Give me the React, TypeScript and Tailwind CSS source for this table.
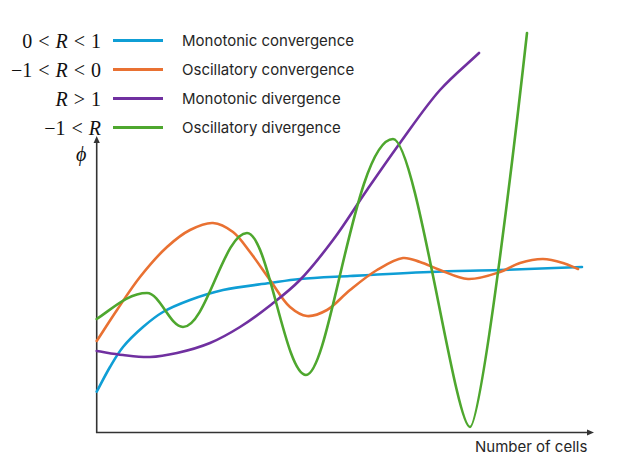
import React from "react";

type Pt = [number, number];

// sampled from the figure, in page pixels
const blue: Pt[] = [
  [96.7, 391.7], [110, 367], [123, 347], [143, 327], [163, 312], [190, 300],
  [223, 290], [270, 283], [300, 279], [350, 276], [430, 272], [500, 270], [582, 267],
];
const orange: Pt[] = [
  [96.7, 341], [117, 310], [140, 277], [167, 247], [190, 230], [213, 223],
  [233, 232], [250, 252], [270, 280], [290, 307], [307, 316], [327, 310],
  [350, 290], [377, 270], [403, 258], [420, 262], [440, 270], [468, 279],
  [500, 272], [520, 263], [543, 259], [563, 263], [578, 269],
];
const purple: Pt[] = [
  [96.7, 351], [123, 355], [150, 357], [177, 353], [210, 343], [240, 327],
  [272, 304], [300, 280], [333, 240], [367, 190], [400, 143], [440, 90], [479, 53],
];

// green is drawn peak to peak with flat handles at each turn
const greenPath =
  "M96.7,319 C112,309 128,293 147,293 C160,293 170,327 183,327 C206,327 224,233 247,233 " +
  "C268,233 285,375 306,375 C330,375 355,139 393,139 C416,139 455,427 470,427 C481,427 514,150 527,33";

// centripetal catmull-rom -> cubic bezier
function smooth(p: Pt[]) {
  const dist = (a: Pt, b: Pt) => Math.sqrt(Math.hypot(b[0] - a[0], b[1] - a[1])) || 1e-6;
  let d = `M${p[0][0]},${p[0][1]}`;
  for (let i = 0; i < p.length - 1; i++) {
    const p1 = p[i];
    const p2 = p[i + 1];
    const p0: Pt = p[i - 1] ?? [2 * p1[0] - p2[0], 2 * p1[1] - p2[1]];
    const p3: Pt = p[i + 2] ?? [2 * p2[0] - p1[0], 2 * p2[1] - p1[1]];
    const d1 = dist(p0, p1);
    const d2 = dist(p1, p2);
    const d3 = dist(p2, p3);
    const c1 = [0, 1].map(
      (k) => (d1 * d1 * p2[k] - d2 * d2 * p0[k] + (2 * d1 * d1 + 3 * d1 * d2 + d2 * d2) * p1[k]) / (3 * d1 * (d1 + d2))
    );
    const c2 = [0, 1].map(
      (k) => (d3 * d3 * p1[k] - d2 * d2 * p3[k] + (2 * d3 * d3 + 3 * d3 * d2 + d2 * d2) * p2[k]) / (3 * d3 * (d3 + d2))
    );
    d += ` C${c1[0].toFixed(2)},${c1[1].toFixed(2)} ${c2[0].toFixed(2)},${c2[1].toFixed(2)} ${p2[0]},${p2[1]}`;
  }
  return d;
}

const series = [
  { label: "Monotonic convergence", color: "bg-[#0f9ed5]", math: ["0", "<", "R", "<", "1"] },
  { label: "Oscillatory convergence", color: "bg-[#e97132]", math: ["−1", "<", "R", "<", "0"] },
  { label: "Monotonic divergence", color: "bg-[#7030a0]", math: ["R", ">", "1"] },
  { label: "Oscillatory divergence", color: "bg-[#4ea72e]", math: ["−1", "<", "R"] },
];

const MathLabel = ({ parts }: { parts: string[] }) => (
  <div className="flex items-center justify-end font-['Liberation_Serif','DejaVu_Serif',serif] text-[20px] leading-none text-[#111]">
    {parts.map((t, i) =>
      t === "<" || t === ">" ? (
        <span key={i} className="px-[6px]">{t}</span>
      ) : t === "R" ? (
        <span key={i} className="italic">{t}</span>
      ) : (
        <span key={i}>{t}</span>
      )
    )}
  </div>
);

export default function App() {
  return (
    <div className="relative w-[617px] h-[456px] bg-white overflow-hidden">
      <svg width="617" height="456" className="block">
        <g stroke="#333" strokeWidth="1.6" fill="none">
          <line x1="96.7" y1="433" x2="96.7" y2="142" />
          <line x1="96" y1="432.5" x2="588" y2="432.5" />
        </g>
        <path d="M96.7,136 L93.6,143 L99.8,143 Z" fill="#333" />
        <path d="M594,432.5 L587,429.4 L587,435.6 Z" fill="#333" />
        <g fill="none" strokeWidth="2.6" strokeLinecap="round" strokeLinejoin="round">
          <path d={smooth(blue)} stroke="#0f9ed5" />
          <path d={smooth(orange)} stroke="#e97132" />
          <path d={smooth(purple)} stroke="#7030a0" />
          <path d={greenPath} stroke="#4ea72e" />
        </g>
        <text
          x="76"
          y="161"
          fontSize="20"
          fontStyle="italic"
          fill="#111"
          fontFamily="'Liberation Serif','DejaVu Serif',serif"
        >
          ϕ
        </text>
        <text x="475" y="452" fontSize="15" fill="#262626" fontFamily="Inter, sans-serif">
          Number of cells
        </text>
      </svg>

      {/* legend sits over the plot area */}
      <div className="absolute left-0 top-[26px] grid grid-cols-[101px_50px_auto] items-center">
        {series.map((s) => (
          <React.Fragment key={s.label}>
            <div className="h-[29px] flex items-center justify-end">
              <MathLabel parts={s.math} />
            </div>
            <div className={`ml-[12px] w-[50px] h-[2.6px] ${s.color}`} />
            <div className="ml-[31px] font-['Inter',sans-serif] text-[15px] leading-none text-[#262626]">
              {s.label}
            </div>
          </React.Fragment>
        ))}
      </div>
    </div>
  );
}
